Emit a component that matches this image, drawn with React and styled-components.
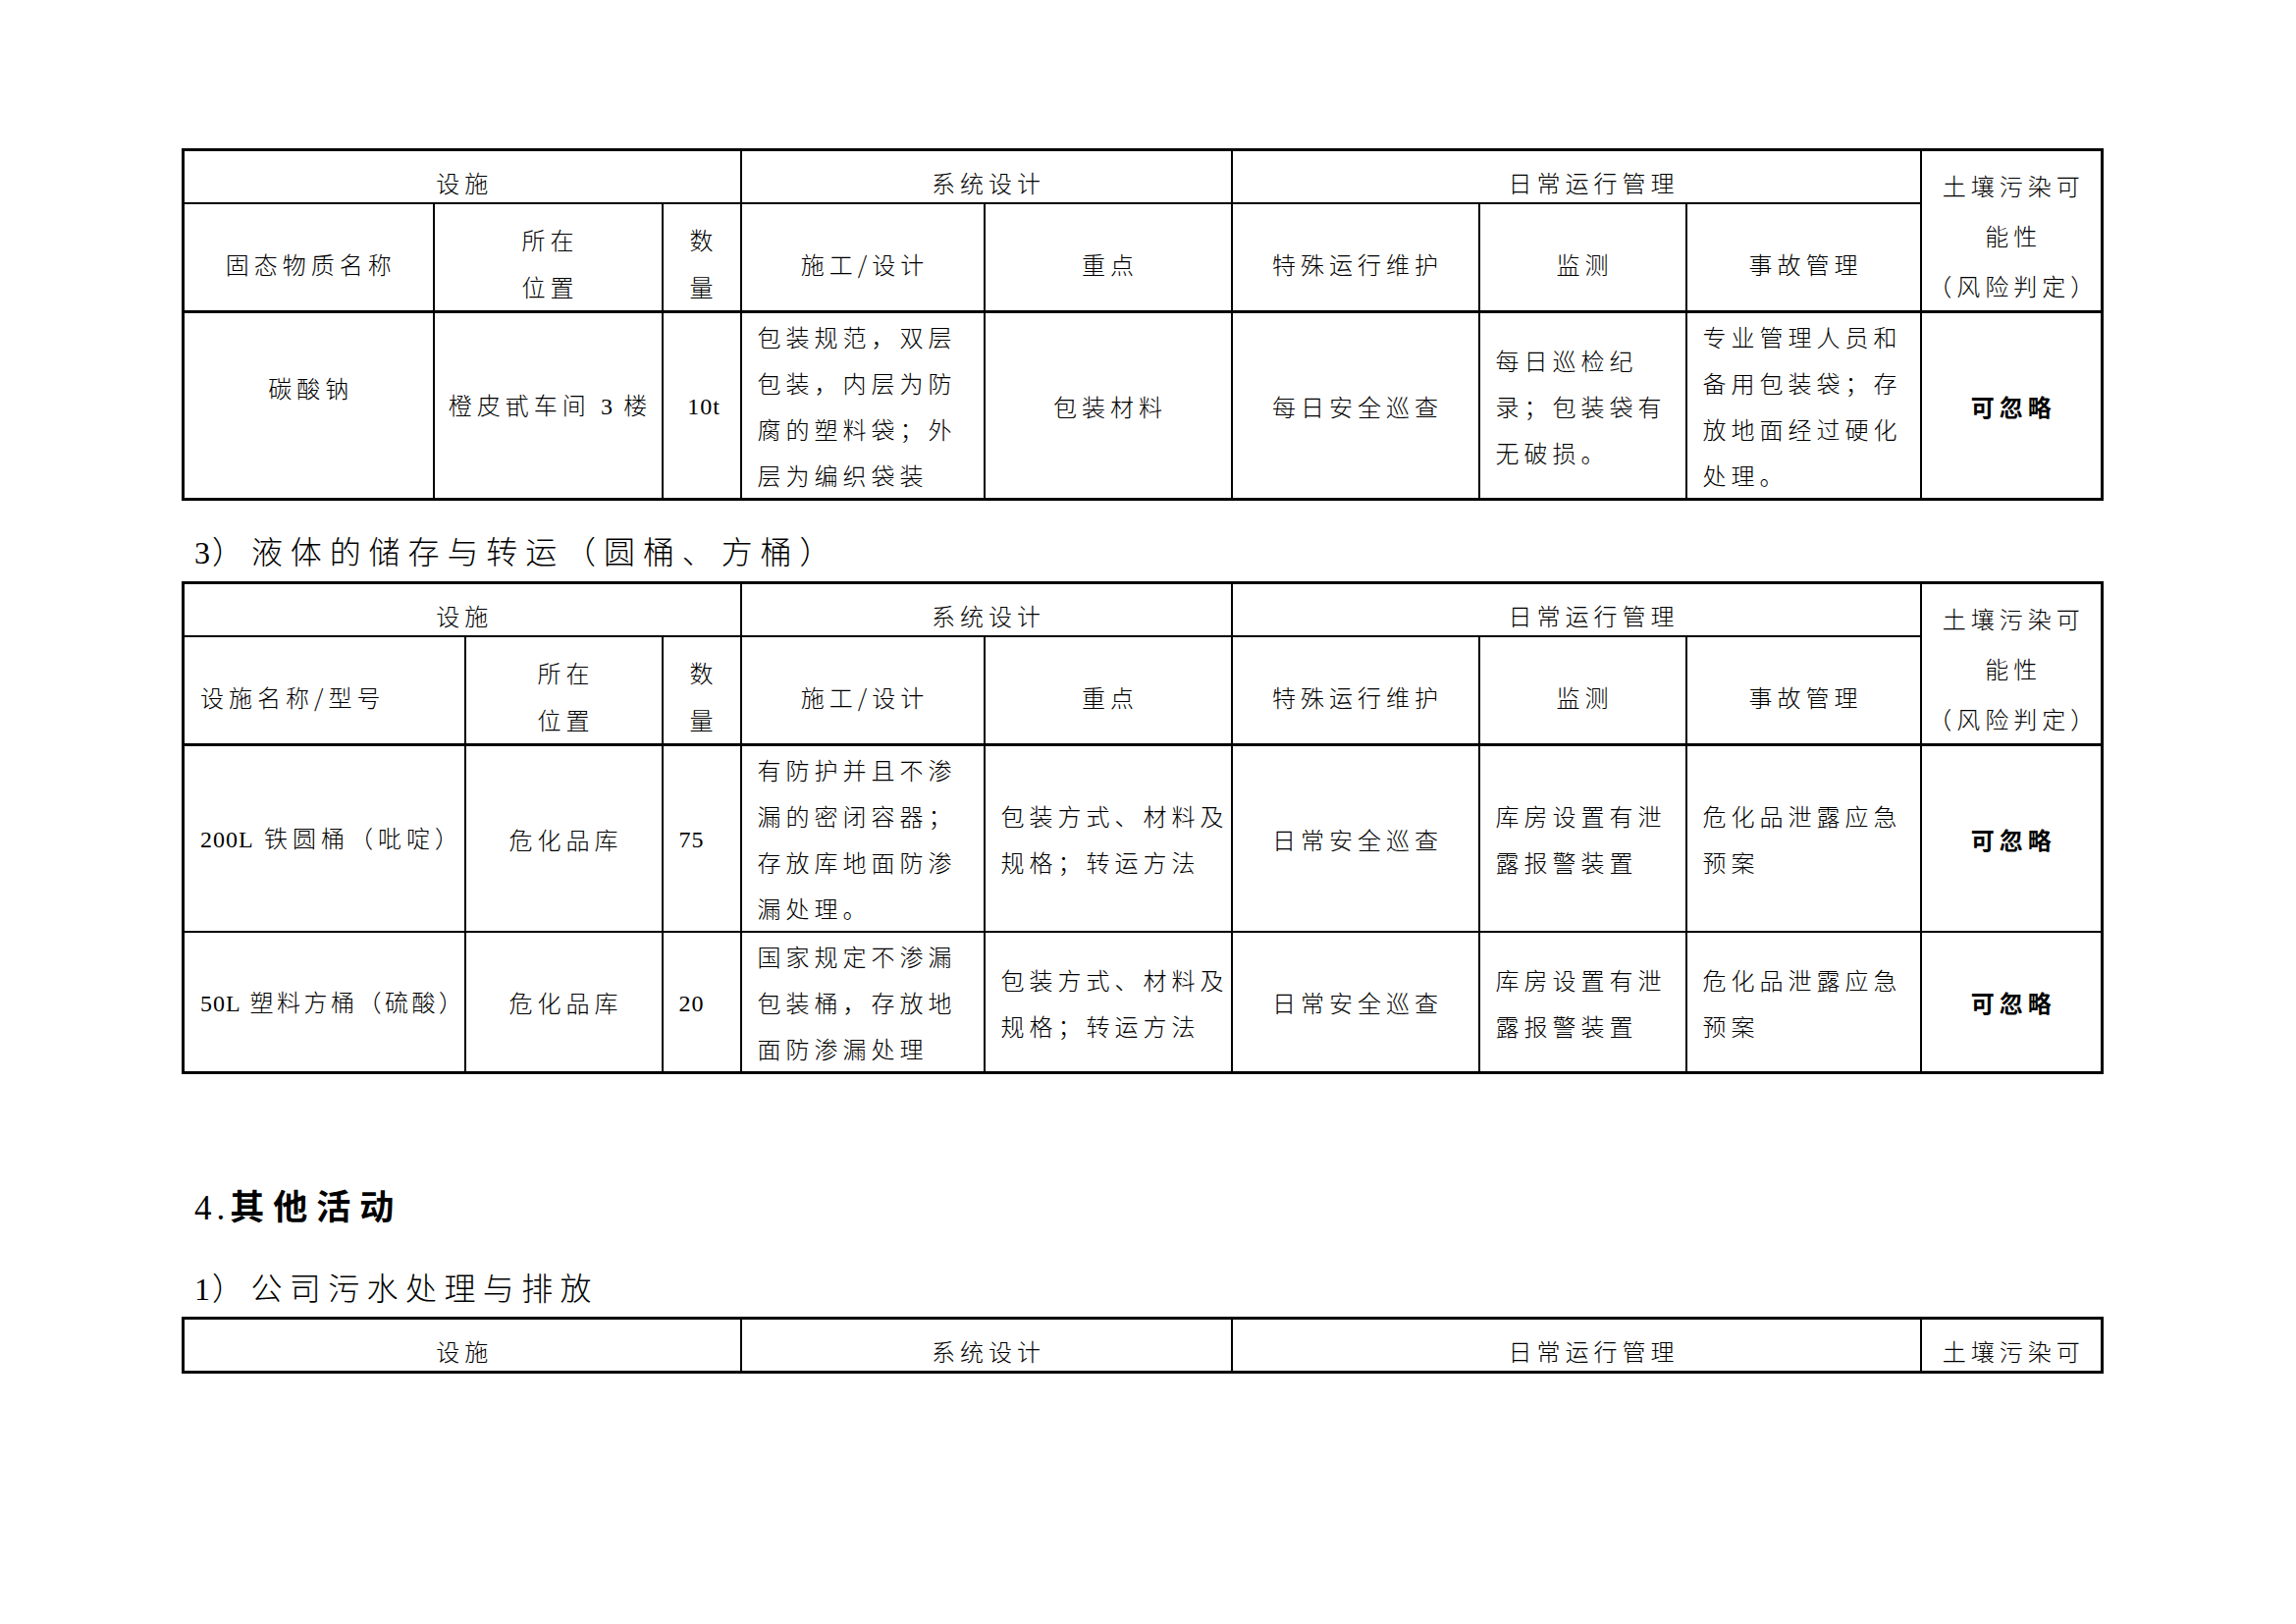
import React from "react";
import styled, { createGlobalStyle } from "styled-components";

const GlobalStyle = createGlobalStyle`
  html, body {
    margin: 0;
    padding: 0;
    background: #fff;
  }
  body {
    font-family: "Noto Sans CJK SC", "Liberation Serif", sans-serif;
    color: #000;
  }
`;

const Page = styled.div`
  width: 2339px;
  min-height: 1654px;
  box-sizing: border-box;
  padding: 151px 0 0 185px;
  overflow: hidden;
`;

const Table = styled.table`
  width: 1955px;
  table-layout: fixed;
  border-collapse: collapse;
  border: 3px solid #000;
  margin-top: ${(p) => p.$top || 0}px;
  font-size: 24px;
  letter-spacing: 5px;
  font-weight: 300;
`;

const Row = styled.tr`
  height: ${(p) => p.$h}px;
`;

const Cell = styled.td`
  border: 2px solid #000;
  border-bottom-width: ${(p) => (p.$thick ? 3 : 2)}px;
  padding: ${(p) =>
    p.$align === "left" ? "0 4px 0 16px" : `0 0 0 ${p.$shift || 5}px`};
  padding-top: ${(p) => p.$drop || 0}px;
  padding-bottom: ${(p) => p.$raise || 0}px;
  text-align: ${(p) => (p.$align === "left" ? "left" : "center")};
  vertical-align: middle;
  line-height: ${(p) => p.$lh || 47}px;
  letter-spacing: ${(p) => (p.$ls ? `${p.$ls}px` : "inherit")};
  font-weight: ${(p) => (p.$bold ? 700 : 300)};
  white-space: nowrap;
  overflow: visible;
`;

const Num = styled.span`
  font-family: "Liberation Serif", serif;
  font-size: 24px;
  letter-spacing: 1px;
  font-weight: 400;
`;

const Heading = styled.div`
  margin-top: ${(p) => p.$top}px;
  padding-left: 13px;
  font-size: 32px;
  line-height: 50px;
  letter-spacing: ${(p) => p.$ls || 7.4}px;
  font-weight: 300;
`;

const Title = styled(Heading)`
  font-size: 35px;
  letter-spacing: 9px;
  font-weight: 700;
`;

const HeadNum = styled.span`
  font-family: "Liberation Serif", serif;
  letter-spacing: ${(p) => p.$ls || 2}px;
  font-weight: 400;
`;

const Lines = ({ lines }) =>
  lines.map((l, i) => (
    <React.Fragment key={i}>
      {i > 0 && <br />}
      {l}
    </React.Fragment>
  ));

const TopHeader = ({ firstCol }) => (
  <>
    <Row $h={52}>
      <Cell colSpan={3} $lh={40} $drop={12}>设施</Cell>
      <Cell colSpan={2} $lh={40} $drop={12}>系统设计</Cell>
      <Cell colSpan={3} $lh={40} $drop={12} $shift={36}>
        日常运行管理
      </Cell>
      <Cell rowSpan={2} $lh={51} $drop={8} $thick>
        <Lines lines={["土壤污染可", "能性", "（风险判定）"]} />
      </Cell>
    </Row>
    <Row $h={109}>
      {firstCol}
      <Cell $lh={48} $drop={12} $thick>
        <Lines lines={["所在", "位置"]} />
      </Cell>
      <Cell $lh={48} $drop={12} $thick>
        <Lines lines={["数", "量"]} />
      </Cell>
      <Cell $drop={12} $thick>施工/设计</Cell>
      <Cell $drop={12} $thick>重点</Cell>
      <Cell $drop={12} $thick>特殊运行维护</Cell>
      <Cell $drop={12} $thick>监测</Cell>
      <Cell $drop={12} $thick>事故管理</Cell>
    </Row>
  </>
);

const Cols = ({ widths }) => (
  <colgroup>
    {widths.map((w, i) => (
      <col key={i} style={{ width: w }} />
    ))}
  </colgroup>
);

const liquids = [
  {
    h: 190,
    ls: 5,
    name: (
      <>
        <Num>200L</Num> 铁圆桶（吡啶）
      </>
    ),
    qty: "75",
    build: ["有防护并且不渗", "漏的密闭容器；", "存放库地面防渗", "漏处理。"],
  },
  {
    h: 142,
    ls: 3.5,
    name: (
      <>
        <Num>50L</Num> 塑料方桶（硫酸）
      </>
    ),
    qty: "20",
    build: ["国家规定不渗漏", "包装桶，存放地", "面防渗漏处理"],
  },
];

export default function App() {
  return (
    <Page>
      <GlobalStyle />
      <Table>
        <Cols widths={[255, 233, 80, 248, 252, 252, 211, 239, 185]} />
        <tbody>
          <TopHeader
            firstCol={
              <Cell $drop={12} $thick>
                固态物质名称
              </Cell>
            }
          />
          <Row $h={190}>
            <Cell $raise={38}>碳酸钠</Cell>
            <Cell>
              橙皮甙车间 <Num>3</Num> 楼
            </Cell>
            <Cell $shift={0}>
              <Num>10t</Num>
            </Cell>
            <Cell $align="left">
              <Lines
                lines={["包装规范，双层", "包装，内层为防", "腐的塑料袋；外", "层为编织袋装"]}
              />
            </Cell>
            <Cell>包装材料</Cell>
            <Cell>每日安全巡查</Cell>
            <Cell $align="left">
              <Lines lines={["每日巡检纪", "录；包装袋有", "无破损。"]} />
            </Cell>
            <Cell $align="left">
              <Lines
                lines={["专业管理人员和", "备用包装袋；存", "放地面经过硬化", "处理。"]}
              />
            </Cell>
            <Cell $bold>可忽略</Cell>
          </Row>
        </tbody>
      </Table>

      <Heading $top={25} $ls={7.9}>
        <HeadNum>3</HeadNum>）液体的储存与转运（圆桶、方桶）
      </Heading>

      <Table $top={4}>
        <Cols widths={[287, 201, 80, 248, 252, 252, 211, 239, 185]} />
        <tbody>
          <TopHeader
            firstCol={
              <Cell $align="left" $drop={12} $thick>
                设施名称/型号
              </Cell>
            }
          />
          {liquids.map((r, i) => (
            <Row key={i} $h={r.h}>
              <Cell $align="left" $ls={r.ls}>
                {r.name}
              </Cell>
              <Cell>危化品库</Cell>
              <Cell $align="left">
                <Num>{r.qty}</Num>
              </Cell>
              <Cell $align="left">
                <Lines lines={r.build} />
              </Cell>
              <Cell $align="left">
                <Lines lines={["包装方式、材料及", "规格；转运方法"]} />
              </Cell>
              <Cell>日常安全巡查</Cell>
              <Cell $align="left">
                <Lines lines={["库房设置有泄", "露报警装置"]} />
              </Cell>
              <Cell $align="left">
                <Lines lines={["危化品泄露应急", "预案"]} />
              </Cell>
              <Cell $bold>可忽略</Cell>
            </Row>
          ))}
        </tbody>
      </Table>

      <Title $top={108}>
        <HeadNum $ls={5}>4.</HeadNum>其他活动
      </Title>
      <Heading $top={29}>
        <HeadNum>1</HeadNum>）公司污水处理与排放
      </Heading>

      <Table $top={3}>
        <Cols widths={[568, 500, 702, 185]} />
        <tbody>
          <Row $h={52}>
            <Cell $lh={40} $drop={12}>设施</Cell>
            <Cell $lh={40} $drop={12}>系统设计</Cell>
            <Cell $lh={40} $drop={12} $shift={36}>
              日常运行管理
            </Cell>
            <Cell $lh={40} $drop={12}>土壤污染可</Cell>
          </Row>
        </tbody>
      </Table>
    </Page>
  );
}
